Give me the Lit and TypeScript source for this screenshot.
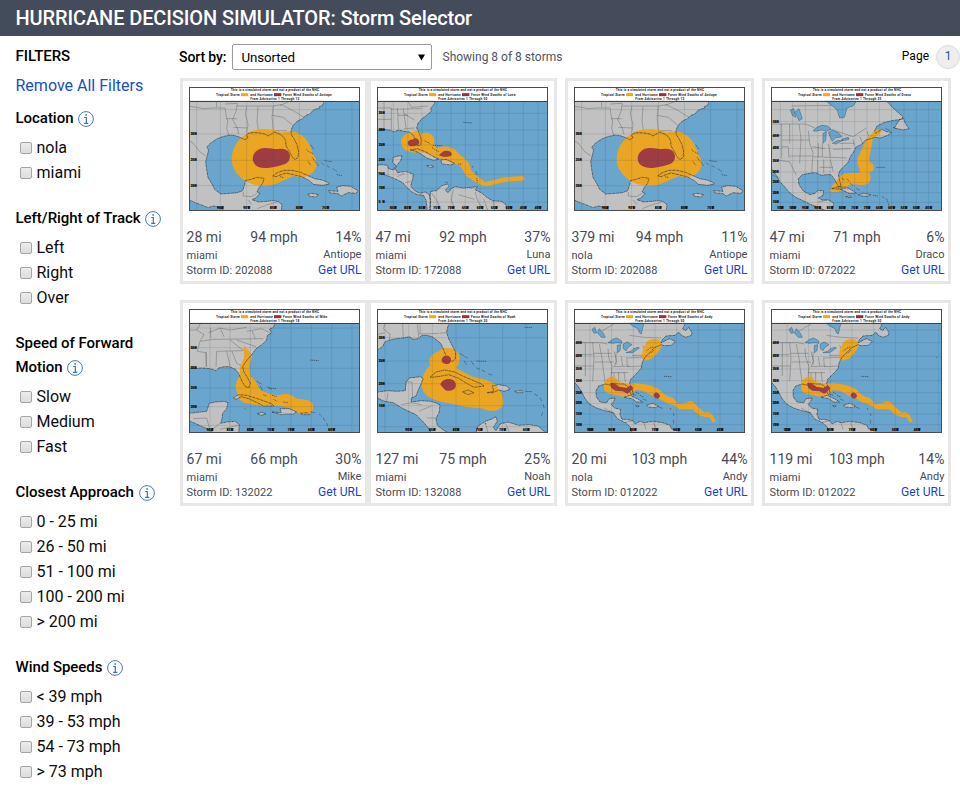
import { LitElement, html, svg, css } from "lit";
import { customElement, property } from "lit/decorators.js";

interface Chart {
  origin: [number, number];
  through: string;
  land: string[];
  borders: string[];
  islets: string;
  storm: string[];
  hurricane: string[];
  gx: number[];
  gy: number[];
  lon: [number, string][];
  lat: [number, string][];
}

const gulf: Chart = {
  origin: [27, 27],
  through: "12",
  land: [
    "M27 70H432L428 82 418 86 420 90 405 94 398 98 390 108 378 112 368 122 352 129 340 142 333 156 334 170 343 184 351 200 356 222 354 238 345 245 336 236 327 218 318 204 317 188 310 176 298 168 284 162 274 168 264 174 254 168 240 165 222 164 206 165 200 172 204 180 194 185 180 178 165 173 150 171 128 176 112 182 92 195 80 208 86 216 82 232 77 252 80 274 84 298 96 318 104 334 122 348 150 346 172 344 188 338 194 320 196 308 212 304 232 298 252 301 248 316 238 328 231 342 240 346 228 360 216 365 236 372 262 370 280 367 296 372 306 380 304 398H134L120 388 100 384 84 389 62 380 46 374 27 366Z",
    "M278 294L292 284 312 277 336 277 362 283 386 294 404 302 426 306 442 312 448 318 428 322 400 319 388 308 366 296 340 290 318 285 300 291 288 296Z",
    "M446 338L474 340 470 327 488 323 512 325 534 338 528 346 504 344 484 354 472 346 450 345Z",
    "M383 349L396 346 416 350 408 357 390 355Z",
  ],
  borders: ["M27 85L50 88 70 92 98 90 135 90 138 110 143 132 140 150 146 172", "M110 70V88M135 78L172 76 168 100 158 125 172 150 176 168", "M172 84H280L276 116 280 160", "M200 86L196 108 204 140 200 164M234 86L231 130 236 160M276 112L310 118 338 142M284 162L280 158H320M280 84L304 80 340 98 372 118M300 82L330 70", "M27 188L40 196 60 222 77 233", "M190 342V354L214 356 232 346M205 366L216 380M232 392L262 380 290 372", "M138 122H170M160 148L202 150"],
  islets: "M380 214l6 8M390 222l12 6M396 238l10 14M408 252l8 12M384 250l8 12M424 254l8 8M440 262l9 7M458 272l12 8M470 290l16 3M433 248l24 3M392 200l10 14M300 296l12 3",
  storm: ["M155 242C156 205 181 174 214 160C245 149 277 152 305 164C327 156 349 159 367 173C387 188 392 210 401 230C412 247 413 266 402 279C387 299 361 300 342 294C316 304 283 325 249 324C198 322 154 285 155 242Z"],
  hurricane: ["M218 241C220 222 234 211 253 210C270 209 280 214 294 213C309 211 321 213 327 224C334 237 328 252 317 257C302 263 285 266 269 269C242 273 218 264 218 241Z"],
  gx: [50, 121, 200, 280, 358, 437, 516],
  gy: [95, 168, 247, 323],
  lon: [[121, "90W"], [200, "90W"], [280, "85W"], [358, "80W"], [437, "75W"]],
  lat: [[168, "30N"], [247, "25N"], [323, "20N"]],
};

const andy: Chart = {
  origin: [30, 33],
  through: "50",
  land: [
    "M30 76H364L356 92 365 98 374 88 384 104 382 112 366 118 352 112 344 102 334 112 306 114 294 126 292 134 316 122 334 130 322 142 300 143 292 140 270 150 258 164 246 174 238 186 234 196 232 210 222 222 210 234 200 244 197 256 204 272 207 285 202 291 196 278 190 264 180 258 164 258 148 255 142 262 124 258 104 264 96 278 97 296 108 312 128 314 136 302 154 300 148 312 142 320 152 330 170 334 168 350 174 364 190 364 206 368 214 378 228 370 240 374 268 370 296 374 318 382 322 392 340 398 346 404H204L200 388 184 374 160 362 148 344 122 338 98 330 76 318 62 300 50 276 40 262 30 252Z",
    "M180 298L198 292 220 302 236 312 218 312 204 302Z",
    "M248 322L266 316 284 325 272 329 252 327Z",
    "M214 323L226 324 220 327Z",
  ],
  borders: ["M30 134H110L130 138M64 134V234M86 134L90 180 86 250M106 138L114 180 118 216 124 258M132 152L134 178 144 206 140 256M30 170H86M30 204H88M88 166H142M92 192H150M150 160L158 190 150 206 196 204M156 162V200M172 176L176 204M188 178L190 206 232 204M140 224H192M150 224V256M164 222V256M180 222L184 252M190 180L234 178M204 172L240 172M236 142L250 172M252 138L262 160M270 126L276 148M112 100L150 78M196 112L240 118 292 120M120 330L150 346M182 374L206 368M268 372L280 404M240 374L246 394"],
  islets: "M206 288l12 4M216 282l10 6M228 292l12 6M238 304l10 3M286 328l10 3M318 330l4 6M328 346l2 8M328 366l1 10M300 235l22 1M526 178l2 1M248 158l8 -6M258 150l12 -4M262 164l8 -8",
  storm: ["M232 178L238 154 246 134C256 120 284 120 292 132C298 146 284 160 274 172C262 188 238 194 232 178Z", "M120 272C118 256 126 246 132 240C144 232 162 238 160 250C180 258 198 256 216 256C246 258 270 264 288 276C296 288 310 296 326 300L344 318 368 314C376 306 390 310 396 320L412 336 424 344C438 340 446 348 450 360L456 370 446 374 436 358 420 356 402 350 386 334 346 334 330 322 306 314 286 302 262 292 236 278 216 276 202 290C186 300 166 294 150 290C132 288 122 282 120 272Z"],
  hurricane: ["M138 256C148 250 158 260 166 266L188 270 200 262 208 270 200 280 190 287 176 280 154 278 142 270Z", "M268 290L276 283 286 288 288 296 280 303 272 298Z"],
  gx: [78, 143, 208, 273, 338, 403, 468, 533],
  gy: [96, 134, 175, 213, 248, 284, 316, 348, 380],
  lon: [[78, "100W"], [143, "90W"], [208, "80W"], [273, "70W"], [338, "60W"], [403, "50W"], [468, "40W"]],
  lat: [[134, "45N"], [175, "40N"], [213, "35N"], [248, "30N"], [284, "25N"], [316, "20N"], [348, "15N"], [380, "10N"]],
};

const charts: Record<string, Chart> = {
  Antiope: gulf,
  Andy: andy,
  Luna: {
    origin: [27, 27],
    through: "50",
    land: [
      "M27 70H202L196 82 188 90 190 100 176 112 160 124 150 136 146 150 154 166 160 186 158 200 150 204 144 190 136 172 124 162 108 160 92 156 78 162 64 156 44 154 27 155Z",
      "M27 262L40 260 58 262 62 272 78 276 84 262 74 254 76 238 90 234 102 234 98 248 90 258 82 272 88 284 112 280 136 288 134 304 128 324 140 338 156 346 172 342 184 350 188 368 184 398H178L174 366 166 352 148 350 132 342 116 328 104 314 84 304 66 296 48 290 27 282Z",
      "M188 340L206 338 220 324 238 318 244 324 232 336 240 344 252 330 262 326 286 330 310 328 328 326 322 336 340 344 356 358 374 368 400 370 414 380 416 398H188L186 356Z",
      "M126 216L148 212 174 222 200 238 212 244 196 247 176 240 156 226 138 218Z",
      "M218 246L234 244 260 256 248 261 222 258Z",
      "M176 263L190 262 198 266 186 269Z",
    ],
    borders: ["M27 90H70M48 70V150M70 90V156M88 90L92 154M106 92L114 150M110 108L140 126M70 94L160 92M120 70L130 88 180 84M90 112H120M27 124H70M108 152L140 150M60 266V290M88 296L110 286M112 314L130 310M192 346L208 370 220 398M256 334L250 366 262 398M322 342L328 366 346 398M346 362L360 398M376 370L380 398M272 350L320 364"],
    islets: "M170 188l10 6M180 192l8 8M192 208l10 8M204 216l10 6M286 133l26 2M270 258l12 1M312 264l4 6M324 280l3 10M326 300l2 14M310 330l4 4M194 202l30 1M232 312l8 2",
    storm: ["M99 194C98 176 112 164 138 161C144 156 156 158 158 168C174 160 194 166 198 180C202 192 194 200 206 210C222 202 250 204 262 216C276 232 300 244 306 264L310 278 324 292 352 312 410 298 462 294C472 296 472 306 462 308L414 311 356 325C340 324 320 312 304 300C286 292 288 274 276 264C254 252 220 244 200 236L160 222C132 228 100 218 99 194Z"],
    hurricane: ["M119 194C122 184 134 186 144 181C154 184 158 196 148 202C134 206 120 208 119 194Z", "M212 232L226 220C236 216 252 220 251 230C248 236 236 236 226 236Z"],
    gx: [76, 119, 162, 206, 249, 292, 336, 379, 423, 466, 510],
    gy: [106, 156, 201, 245, 289, 331, 372],
    lon: [[76, "85W"], [119, "80W"], [162, "85W"], [206, "75W"], [249, "70W"], [292, "65W"], [336, "60W"], [379, "55W"], [423, "50W"], [466, "45W"], [510, "40W"]],
    lat: [[106, "35N"], [156, "30N"], [201, "25N"], [245, "20N"], [289, "15N"], [331, "10N"], [372, "5N"]],
  },
  Draco: {
    origin: [34, 27],
    through: "35",
    land: [
      "M34 70H382L398 88 416 104 430 116 426 124 396 128 372 134 352 144 344 160 348 166 366 154 378 160 396 164 384 172 362 180 346 178 334 182 318 186 304 200 288 208 282 222 272 236 266 252 252 266 242 276 236 290 240 308 244 324 236 326 226 306 214 290 198 290 186 292 168 284 148 286 128 290 116 302 118 320 130 338 150 350 166 346 174 338 192 338 190 352 176 360 188 366 208 366 222 376 216 398H198L176 388 150 378 126 366 108 358 90 344 76 328 60 310 50 292 38 278 34 266Z",
      "M404 150L420 124 432 122 438 138 448 152 430 156Z",
      "M216 332L236 326 262 328 282 340 290 346 268 346 244 334Z",
      "M296 350L312 346 334 350 324 355 300 353Z",
      "M258 356L272 354 276 358 264 359Z",
    ],
    borders: ["M34 138H138L166 150M66 138V240M90 138V196M118 138L124 180 120 256M146 158L150 196 160 224 156 286M34 172H64M66 186H150M66 206H86M86 208L88 240M90 234H156M158 206L196 212M176 196V238M188 196V236M206 198L212 236M160 236L262 240M174 246V284M192 244V286M212 244L220 280M220 214L272 212M240 196H284M300 176L310 198M280 184L284 204M322 160L330 180M180 268H220M196 148L280 176 320 150M96 84L240 82M34 290L60 300M176 372L200 366M56 246L90 252 110 292"],
    islets: "M246 300l8 6M262 302l6 8M272 316l8 8M290 332l10 5M340 352l14 2M368 356l6 4M380 362l5 10M386 376l2 8M350 268l26 0M378 152l14 6M236 330l30 3M400 148l8 4",
    storm: ["M212 336C216 322 228 312 236 302C244 286 262 284 284 284C296 288 306 282 298 270C288 252 294 236 304 220C312 204 316 188 328 174C340 162 354 152 364 154C370 162 358 172 344 178C336 192 336 206 332 226C326 240 326 254 340 258C346 272 342 282 328 282C338 300 332 320 312 321C294 322 282 314 266 322C252 336 230 346 216 342C212 340 211 338 212 336Z"],
    hurricane: [],
    gx: [62, 99, 137, 174, 211, 248, 285, 322, 359, 396, 433, 470, 507],
    gy: [95, 131, 173, 211, 248, 282, 313, 344, 373],
    lon: [[62, "110W"], [99, "105W"], [137, "95W"], [174, "90W"], [211, "85W"], [248, "80W"], [285, "75W"], [322, "70W"], [359, "65W"], [396, "60W"], [433, "55W"], [470, "50W"], [507, "45W"]],
    lat: [[131, "50N"], [173, "45N"], [211, "40N"], [248, "35N"], [282, "30N"], [313, "25N"], [344, "20N"], [373, "15N"]],
  },
  Mike: {
    origin: [27, 33],
    through: "18",
    land: [
      "M27 76H285L280 88 268 94 276 104 262 112 260 126 246 140 228 152 214 172 198 190 188 206 192 222 202 238 211 256 206 270 194 264 184 246 176 226 166 214 148 206 132 206 116 210 108 218 90 212 66 210 42 212 27 208Z",
      "M27 346L60 342 80 340 88 316 106 312 132 310 144 314 140 332 128 346 126 362 122 376 140 372 166 370 178 380 176 404H100L80 392 54 380 27 368Z",
      "M160 300L176 290 200 292 226 300 250 308 276 318 282 324 250 324 232 314 206 302 184 296 168 304Z",
      "M276 342L304 344 300 332 328 332 350 342 340 348 316 348 304 350Z",
      "M232 347L246 343 258 348 244 352Z",
      "M362 346L382 344 388 350 366 350Z",
    ],
    borders: ["M62 76L50 96 72 110 60 130 52 160 78 164 80 206M27 96L50 96M78 162V206M110 160L108 206M140 160L150 204M110 160L190 158M156 160L170 196 186 204M86 104L120 90 150 96 200 88M62 130L100 124 250 122M150 126L180 150 212 168M170 126L228 146M200 100L244 92 270 104M120 90L132 116M27 150H52M92 90V120M216 98L226 122M40 362L80 360 88 390M120 376L100 392M176 382L120 394"],
    islets: "M230 250l14 8M240 264l8 14M262 266l12 8M250 290l10 4M276 292l14 4M280 304l12 6M266 270l24 2M390 186l26 2M392 342l14 2M418 348l8 8M430 360l5 8M440 376l3 8M446 390l2 8M310 312l14 2M194 332l3 1",
    storm: ["M192 144L208 160 216 178 208 202 212 236C230 246 232 264 242 276L268 288 296 292C316 284 336 288 346 300C370 306 392 304 398 318C404 334 394 350 376 348C354 348 346 338 328 330C300 318 276 326 254 322C226 320 202 318 188 312C174 304 172 288 168 274C164 258 174 242 180 232L180 206 192 180Z"],
    hurricane: [],
    gx: [90, 150, 211, 272, 333, 394, 455, 516],
    gy: [90, 149, 211, 270, 326, 382],
    lon: [[90, "90W"], [150, "85W"], [211, "80W"], [272, "75W"], [333, "70W"], [394, "65W"], [455, "60W"]],
    lat: [[149, "35N"], [211, "30N"], [270, "25N"], [326, "20N"]],
  },
  Noah: {
    origin: [27, 33],
    through: "20",
    land: [
      "M27 76H244L238 90 236 104 242 122 252 142 263 162 262 182 254 190 242 186 232 168 224 148 218 136 206 126 192 116 176 112 162 112 150 122 136 124 124 116 106 120 84 122 66 126 50 132 44 146 27 156Z",
      "M27 282L60 278 86 280 112 278 114 252 124 240 158 236 166 242 158 260 150 278 144 294 130 300 130 312 160 308 190 310 216 320 214 342 204 362 208 382 226 396 240 404H190L178 386 162 368 144 350 122 340 98 328 76 314 50 310 27 300Z",
      "M186 238L204 222 230 216 260 222 284 234 312 246 336 256 348 264 318 268 296 256 270 240 242 230 210 236Z",
      "M358 284L378 280 372 264 392 260 416 264 426 274 408 280 392 276 376 284Z",
      "M284 282L300 276 318 284 300 290Z",
      "M324 404L330 384 352 370 374 362 384 356 388 370 376 388 384 398 396 378 420 372 452 382 484 380 510 384 526 398 538 404Z",
      "M440 280L462 278 464 284 444 284Z",
    ],
    borders: ["M52 76L46 92 66 108 64 126M104 76L106 120M148 76L152 118M154 108L212 106M156 76V108M214 106L236 104M27 110L50 104M100 320L130 314 160 320M114 252L132 252 134 300M152 340L190 324M176 360H206M60 284L56 310M352 374L360 404M414 378L424 404"],
    islets: "M276 166l12 8M290 176l10 4M288 188l8 12M310 190l8 12M326 210l10 4M342 216l10 6M362 228l12 4M326 189l28 1M470 88l24 1M472 280l20 1M500 288l10 6M516 300l6 10M526 320l3 12M524 344l-4 10M350 376l6 2",
    storm: ["M187 202C176 180 194 166 212 160C226 144 254 148 266 160C280 174 276 196 264 210L290 224 318 238C346 242 376 250 390 270C402 286 408 304 406 318C400 338 378 342 354 336C336 328 318 332 298 328C266 320 242 316 222 312C194 304 174 298 164 276C156 252 164 224 187 202Z"],
    hurricane: ["M221 186C221 178 228 172 236 173C246 173 250 180 249 188C248 196 240 199 233 198C226 197 221 193 221 186Z", "M217 260C220 248 232 243 244 243C258 244 266 254 263 266C260 275 248 280 238 278C228 276 226 268 217 260Z"],
    gx: [51, 122, 193, 264, 334, 404, 475],
    gy: [119, 189, 257, 323, 386],
    lon: [[122, "90W"], [193, "85W"], [264, "80W"], [334, "75W"], [404, "70W"], [475, "65W"]],
    lat: [[119, "30N"], [189, "25N"], [257, "20N"], [323, "15N"]],
  },
};

const lakes: Record<string, string> = {
  Andy:
    "M132 134L146 124 158 120 172 128 174 136 160 134 146 136ZM160 142L170 140 168 158 160 164ZM178 138L190 132 204 140 192 148 186 158 178 152ZM186 164L204 158 208 152 222 148 226 150 206 164ZM84 94L92 88 98 104 90 106ZM100 104L106 92 118 106 124 118 112 118ZM196 76H240L236 90 232 108 226 104 222 92 206 84Z",
  Draco:
    "M160 158L172 148 186 142 204 144 214 154 200 160 186 156 166 160ZM190 166L200 162 198 188 190 196ZM206 164L220 156 238 166 246 176 226 180 218 190ZM218 196L232 188 250 186 230 198ZM246 184L266 178 268 184 250 188ZM92 96L102 92 108 118 98 112ZM106 102L118 92 128 122 118 128ZM200 70H290L280 84 262 90 254 118 240 120 232 96 214 80Z",
};

@customElement("storm-chart")
class StormChart extends LitElement {
  @property() name = "";

  static styles = css`
    :host { display: block; width: 171px; height: 124px; }
    svg { display: block; width: 171px; height: 124px; }
    .sea { fill: #6aa5cd; }
    .land { fill: #c1c1c1; }
    .coast { fill: none; stroke: #1c242b; stroke-width: 2; stroke-dasharray: 7 1.5 3 1; opacity: .85; }
    .border { fill: none; stroke: #444; stroke-width: 1.5; opacity: .65; }
    .islet { fill: none; stroke: #1f2e3c; stroke-width: 2.2; stroke-dasharray: 4 2; opacity: .8; }
    .lake { fill: #6aa5cd; stroke: #2d5674; stroke-width: 1.4; }
    .grid { fill: none; stroke: #26455c; stroke-width: 1.5; opacity: .27; }
    .storm { fill: #eaa522; }
    .hurricane { fill: #a03c43; }
    .frame { fill: none; stroke: #4b4b4b; stroke-width: 3; }
    .rule { stroke: #3d4246; stroke-width: 3; }
    .head { font: 700 9.5px Roboto, "Liberation Sans", sans-serif; fill: #222; }
    .tick { font: 900 9px Roboto, "Liberation Sans", sans-serif; fill: #0c0c0c; stroke: #0c0c0c; stroke-width: .6; }
  `;

  render() {
    const c = charts[this.name];
    if (!c) return html``;
    const [ox, oy] = c.origin;
    const top = oy + 43;
    const bottom = oy + 371;
    const grid = c.gx.map((x) => `M${x} ${top}V${bottom}`).join("") + c.gy.map((y) => `M${ox} ${y}H${ox + 511}`).join("");
    return html`<svg viewBox="0 0 513 372">
      <rect width="513" height="372" fill="#fff"></rect>
      <g transform="translate(${-ox} ${-oy})">
        <rect class="sea" x=${ox} y=${top} width="513" height="329"></rect>
        ${c.land.map((d) => svg`<path class="land" d=${d} />`)}
        ${c.borders.map((d) => svg`<path class="border" d=${d} />`)}
        <path class="lake" d=${lakes[this.name] ?? ""}></path>
        ${c.storm.map((d) => svg`<path class="storm" d=${d} />`)}
        ${c.land.map((d) => svg`<path class="coast" d=${d} />`)}
        <path class="islet" d=${c.islets}></path>
        ${c.hurricane.map((d) => svg`<path class="hurricane" d=${d} />`)}
        <path class="grid" d=${grid}></path>
        ${c.lat.map(([y, t]) => svg`<text class="tick" x=${ox + 5} y=${y + 3} textLength="18">${t}</text>`)}
        ${c.lon.map(([x, t]) => svg`<text class="tick" x=${x - 10} y=${bottom - 5} textLength="20">${t}</text>`)}
      </g>
      <text class="head" x="125" y="13" textLength="265">This is a simulated storm and not a product of the NHC</text>
      <text class="head" x="81" y="27" textLength="71">Tropical Storm</text>
      <rect x="156" y="18.5" width="21" height="9" fill="#fba60d"></rect>
      <text class="head" x="184" y="27" textLength="67">and Hurricane</text>
      <rect x="255" y="18.5" width="22" height="9" fill="#a32a2e"></rect>
      <text class="head" x="282" y="27" textLength=${115 + this.name.length * 4.5}>Force Wind Swaths of ${this.name}</text>
      <text class="head" x="184" y="39" textLength="147">From Advisories 1 Through ${c.through}</text>
      <path class="rule" d="M0 43.500H513"></path>
      <rect class="frame" x="1.500" y="1.500" width="510" height="369"></rect>
    </svg>`;
  }
}

@customElement("storm-card")
class StormCard extends LitElement {
  @property({ attribute: false }) storm: string[] = [];

  static styles = css`
    :host {
      display: block; box-sizing: border-box; height: 206px;
      border: 3px solid #e8e7e5; padding: 6px 3.5px 0 3.5px; color: #454a56;
    }
    :host(:nth-child(even)) { padding-left: 4.5px; }
    :host(:nth-child(even)) .chart { margin-left: 1.5px; }
    .chart { display: block; margin-left: 2.5px; }
    .stats { display: grid; grid-template-columns: 1fr auto 1fr; margin-top: 16px; font-size: 14px; line-height: 20px; letter-spacing: .05px; }
    .pct { text-align: right; }
    .row { display: flex; justify-content: space-between; font-size: 11px; line-height: 15px; letter-spacing: .05px; }
    .place { position: relative; top: 1px; }
    .id { margin-top: 1px; }
    a { color: #1644cf; font-size: 12px; }
  `;

  render() {
    const [dist, speed, pct, place, name, id] = this.storm;
    return html`
      <storm-chart class="chart" .name=${name}></storm-chart>
      <div class="stats"><span>${dist}</span><span>${speed}</span><span class="pct">${pct}</span></div>
      <div class="row"><span class="place">${place}</span><span>${name}</span></div>
      <div class="row id"><span>Storm ID: ${id}</span><a>Get URL</a></div>
    `;
  }
}

const filters: [string, string[]][] = [
  ["Location", ["nola", "miami"]],
  ["Left/Right of Track", ["Left", "Right", "Over"]],
  ["Speed of Forward Motion", ["Slow", "Medium", "Fast"]],
  ["Closest Approach", ["0 - 25 mi", "26 - 50 mi", "51 - 100 mi", "100 - 200 mi", "> 200 mi"]],
  ["Wind Speeds", ["< 39 mph", "39 - 53 mph", "54 - 73 mph", "> 73 mph"]],
];

const storms: string[][] = [
  ["28 mi", "94 mph", "14%", "miami", "Antiope", "202088"],
  ["47 mi", "92 mph", "37%", "miami", "Luna", "172088"],
  ["379 mi", "94 mph", "11%", "nola", "Antiope", "202088"],
  ["47 mi", "71 mph", "6%", "miami", "Draco", "072022"],
  ["67 mi", "66 mph", "30%", "miami", "Mike", "132022"],
  ["127 mi", "75 mph", "25%", "miami", "Noah", "132088"],
  ["20 mi", "103 mph", "44%", "nola", "Andy", "012022"],
  ["119 mi", "103 mph", "14%", "miami", "Andy", "012022"],
];

@customElement("app-root")
class AppRoot extends LitElement {
  static styles = css`
    :host { display: block; height: 790px; overflow: hidden; background: #fff; color: #000; font-family: Roboto, "Liberation Sans", sans-serif; }
    .bar { height: 36px; background: #444b5b; color: #fff; font-size: 20px; line-height: 36px; padding-left: 15.5px; font-weight: 500; letter-spacing: -.12px; }
    .page { display: flex; }
    .side { width: 165px; padding: 8px 0 0 15.5px; box-sizing: border-box; }
    .title { font-size: 15px; font-weight: 500; line-height: 24px; letter-spacing: -.05px; }
    .clear { display: block; color: #1a4ccb; font-size: 16px; line-height: 24px; margin: 6px 0 8px; }
    .group { margin-bottom: 21.5px; }
    .group h3 { margin: 0 0 4.5px; font-size: 15px; font-weight: 500; line-height: 24px; letter-spacing: -.03px; }
    .info { width: 16px; height: 16px; vertical-align: -4px; margin-left: 1px; }
    .option { display: flex; align-items: center; height: 25px; font-size: 16px; padding-left: 4.5px; color: #0c0c0c; }
    .box { width: 12px; height: 12px; box-sizing: border-box; border: 1px solid #a6a6a6; border-radius: 2px; background: linear-gradient(#ececec, #dcdcdc); margin-right: 4.5px; position: relative; top: 1px; }
    .main { width: 795px; padding-left: 15px; box-sizing: border-box; }
    .tools { display: flex; height: 42px; align-items: center; }
    .sort { width: 53px; margin-left: -1px; font-size: 14px; font-weight: 500; letter-spacing: -.1px; }
    .select { width: 200px; height: 26px; box-sizing: border-box; border: 1px solid #9b9b9b; border-radius: 2px; display: flex; align-items: center; justify-content: space-between; padding: 0 6px 0 8.5px; font-size: 13.33px; letter-spacing: -.1px; }
    .count { font-size: 12px; color: #4d5463; margin-left: 10.5px; flex: 1; }
    .pager { font-size: 12px; position: relative; top: -1px; }
    .num { width: 24px; height: 24px; box-sizing: border-box; border: 1px solid #dcdbd8; border-radius: 50%; background: #efeeec; color: #1c5b90; font-size: 12px; line-height: 21px; text-align: center; margin-left: 7px; }
    .cards { display: grid; grid-template-columns: 188px 189px 189px 189px; row-gap: 16px; }
    .cards storm-card:nth-child(4n + 3) { margin-left: 8px; margin-right: -8px; }
    .cards storm-card:nth-child(4n) { margin-left: 16px; margin-right: -16px; }
  `;

  render() {
    const info = html`<svg class="info" viewBox="0 0 16 16"><circle cx="8" cy="8" r="7.4" fill="none" stroke="#4478c4"></circle><path d="M8.100 3V5M6.200 6.500H8.300V12.300M6.200 12.300H10.300" fill="none" stroke="#3a70bf" stroke-width="1.200"></path></svg>`;
    return html`
      <header class="bar">HURRICANE DECISION SIMULATOR: Storm Selector</header>
      <div class="page">
        <aside class="side">
          <div class="title">FILTERS</div>
          <a class="clear">Remove All Filters</a>
          ${filters.map(([title, options]) => html`
            <section class="group">
              <h3>${title} ${info}</h3>
              ${options.map((o) => html`<label class="option"><span class="box"></span>${o}</label>`)}
            </section>`)}
        </aside>
        <main class="main">
          <div class="tools">
            <span class="sort">Sort by:</span>
            <div class="select"><span>Unsorted</span><svg width="7" height="7" viewBox="0 0 7 7"><path d="M0 .5H7L3.500 6.500Z" fill="#000"></path></svg></div>
            <span class="count">Showing 8 of 8 storms</span>
            <span class="pager">Page</span><span class="num">1</span>
          </div>
          <div class="cards">${storms.map((s) => html`<storm-card .storm=${s}></storm-card>`)}</div>
        </main>
      </div>
    `;
  }
}
